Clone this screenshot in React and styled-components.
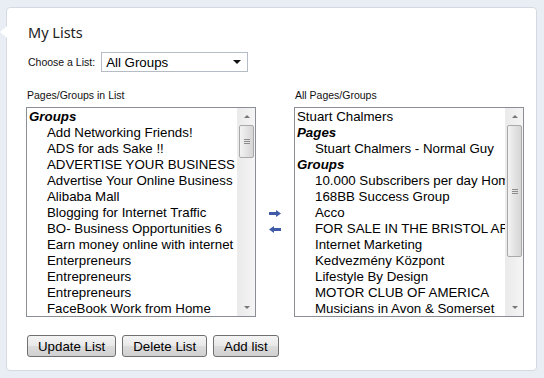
import styled, { createGlobalStyle } from 'styled-components';

const Global = createGlobalStyle`
  html, body { margin: 0; padding: 0; background: #e9eef4; }
  body { font-family: "Liberation Sans", Arial, sans-serif; }
`;

const Page = styled.div`
  width: 544px;
  height: 378px;
  padding: 7px 7px 7px 6px;
  box-sizing: border-box;
`;

const Panel = styled.div`
  position: relative;
  height: 364px;
  box-sizing: border-box;
  background: #fff;
  border: 1px solid #d3dae3;
  border-radius: 4px;
  padding: 14px 12px 0 19px;
`;

const Pointer = styled.div`
  position: absolute;
  left: -7px;
  top: 18px;
  width: 0;
  height: 0;
  border-top: 6px solid transparent;
  border-bottom: 6px solid transparent;
  border-right: 7px solid #fff;
`;

const Title = styled.h2`
  margin: 0 0 0 2px;
  font-family: "Noto Sans", "Liberation Sans", sans-serif;
  font-weight: normal;
  font-size: 14.5px;
  line-height: 20px;
  color: #222;
`;

const ChooseRow = styled.div`
  display: flex;
  align-items: center;
  gap: 6px;
  margin-top: 10px;
  margin-left: 2px;
`;

const Label = styled.span`
  font-size: 10.5px;
  color: #111;
`;

const Select = styled.div`
  width: 147px;
  height: 20px;
  box-sizing: border-box;
  border: 1px solid #b5bcc6;
  display: flex;
  align-items: center;
  justify-content: space-between;
  padding: 0 6px 0 4px;
  font-size: 13.3px;
  color: #000;
`;

const Caret = styled.span`
  width: 0;
  height: 0;
  border-left: 4px solid transparent;
  border-right: 4px solid transparent;
  border-top: 4px solid #111;
`;

const Columns = styled.div`
  display: grid;
  grid-template-columns: 230px 38px 230px;
  margin-top: 17px;
`;

const Column = styled.div`
  display: flex;
  flex-direction: column;
  gap: 6px;
`;

const ColLabel = styled(Label)`
  padding-left: 1px;
`;

const ListBox = styled.div`
  display: flex;
  height: 210px;
  box-sizing: border-box;
  border: 1px solid #8b8e94;
  background: #fff;
`;

const Items = styled.div`
  flex: 1;
  min-width: 0;
  overflow: hidden;
  padding: 1px 0 0 2px;
`;

const Item = styled.div`
  font-size: 13.3px;
  line-height: 16px;
  height: 16px;
  white-space: nowrap;
  color: #000;
  padding-left: ${p => (p.$indent ? '18px' : '0')};
  font-weight: ${p => (p.$head ? 'bold' : 'normal')};
  font-style: ${p => (p.$head ? 'italic' : 'normal')};
`;

const Scroll = styled.div`
  width: 17px;
  flex-shrink: 0;
  display: flex;
  flex-direction: column;
  background: linear-gradient(to right, #eaeaea, #f5f5f5);
  border-left: 1px solid #ececec;
`;

const ScrollBtn = styled.div`
  height: 17px;
  display: flex;
  align-items: center;
  justify-content: center;
`;

const Arrow = styled.span`
  width: 0;
  height: 0;
  border-left: 3px solid transparent;
  border-right: 3px solid transparent;
  ${p => (p.$down ? 'border-top: 3px solid #777;' : 'border-bottom: 3px solid #777;')}
`;

const Track = styled.div`
  flex: 1;
  position: relative;
`;

const Thumb = styled.div`
  position: absolute;
  left: 1px;
  right: 1px;
  top: ${p => p.$top}px;
  height: ${p => p.$h}px;
  box-sizing: border-box;
  border: 1px solid #a9a9a9;
  border-radius: 2px;
  background: linear-gradient(to right, #f3f3f3, #e2e2e2 55%, #d6d6d6);
  display: flex;
  flex-direction: column;
  align-items: center;
  justify-content: center;
  gap: 1px;
`;

const Grip = styled.span`
  width: 6px;
  height: 1px;
  background: #8d8d8d;
`;

const Middle = styled.div`
  display: flex;
  flex-direction: column;
  align-items: center;
  justify-content: center;
  gap: 9px;
  padding-top: 36px;
`;

const ButtonRow = styled.div`
  display: flex;
  gap: 6px;
  margin-top: 18px;
  margin-left: 1px;
`;

const Button = styled.button`
  height: 22px;
  padding: 0 10px;
  font-family: "Liberation Sans", Arial, sans-serif;
  font-size: 13.3px;
  color: #000;
  border: 1px solid #707070;
  border-radius: 3px;
  background: linear-gradient(#f4f4f4, #e8e8e8 50%, #dcdcdc 51%, #d0d0d0);
`;

function MoveArrow({ dir }) {
  const d = dir === 'right'
    ? 'M0 2 H7 V0 L12 3.5 L7 7 V5 H0 Z'
    : 'M12 2 H5 V0 L0 3.5 L5 7 V5 H12 Z';
  return (
    <svg width="12" height="7" viewBox="0 0 12 7">
      <path d={d} fill="#3f5aa6" />
    </svg>
  );
}

function Scrollbar({ top, h }) {
  return (
    <Scroll>
      <ScrollBtn><Arrow /></ScrollBtn>
      <Track>
        <Thumb $top={top} $h={h}>
          <Grip /><Grip /><Grip />
        </Thumb>
      </Track>
      <ScrollBtn><Arrow $down /></ScrollBtn>
    </Scroll>
  );
}

const inList = [
  'Add Networking Friends!',
  'ADS for ads Sake !!',
  'ADVERTISE YOUR BUSINESS',
  'Advertise Your Online Business',
  'Alibaba Mall',
  'Blogging for Internet Traffic',
  'BO- Business Opportunities 6',
  'Earn money online with internet is',
  'Enterpreneurs',
  'Entrepreneurs',
  'Entrepreneurs',
  'FaceBook Work from Home',
];

const allGroups = [
  '10.000 Subscribers per day Home',
  '168BB Success Group',
  'Acco',
  'FOR SALE IN THE BRISTOL AREA',
  'Internet Marketing',
  'Kedvezmény Központ',
  'Lifestyle By Design',
  'MOTOR CLUB OF AMERICA',
  'Musicians in Avon & Somerset',
];

export default function App() {
  return (
    <Page>
      <Global />
      <Panel>
        <Pointer />
        <Title>My Lists</Title>
        <ChooseRow>
          <Label>Choose a List:</Label>
          <Select>
            All Groups
            <Caret />
          </Select>
        </ChooseRow>
        <Columns>
          <Column>
            <ColLabel>Pages/Groups in List</ColLabel>
            <ListBox>
              <Items>
                <Item $head>Groups</Item>
                {inList.map((t, i) => <Item key={i} $indent>{t}</Item>)}
              </Items>
              <Scrollbar top={0} h={33} />
            </ListBox>
          </Column>
          <Middle>
            <MoveArrow dir="right" />
            <MoveArrow dir="left" />
          </Middle>
          <Column>
            <ColLabel>All Pages/Groups</ColLabel>
            <ListBox>
              <Items>
                <Item>Stuart Chalmers</Item>
                <Item $head>Pages</Item>
                <Item $indent>Stuart Chalmers - Normal Guy</Item>
                <Item $head>Groups</Item>
                {allGroups.map((t, i) => <Item key={i} $indent>{t}</Item>)}
              </Items>
              <Scrollbar top={0} h={132} />
            </ListBox>
          </Column>
        </Columns>
        <ButtonRow>
          <Button>Update List</Button>
          <Button>Delete List</Button>
          <Button>Add list</Button>
        </ButtonRow>
      </Panel>
    </Page>
  );
}
